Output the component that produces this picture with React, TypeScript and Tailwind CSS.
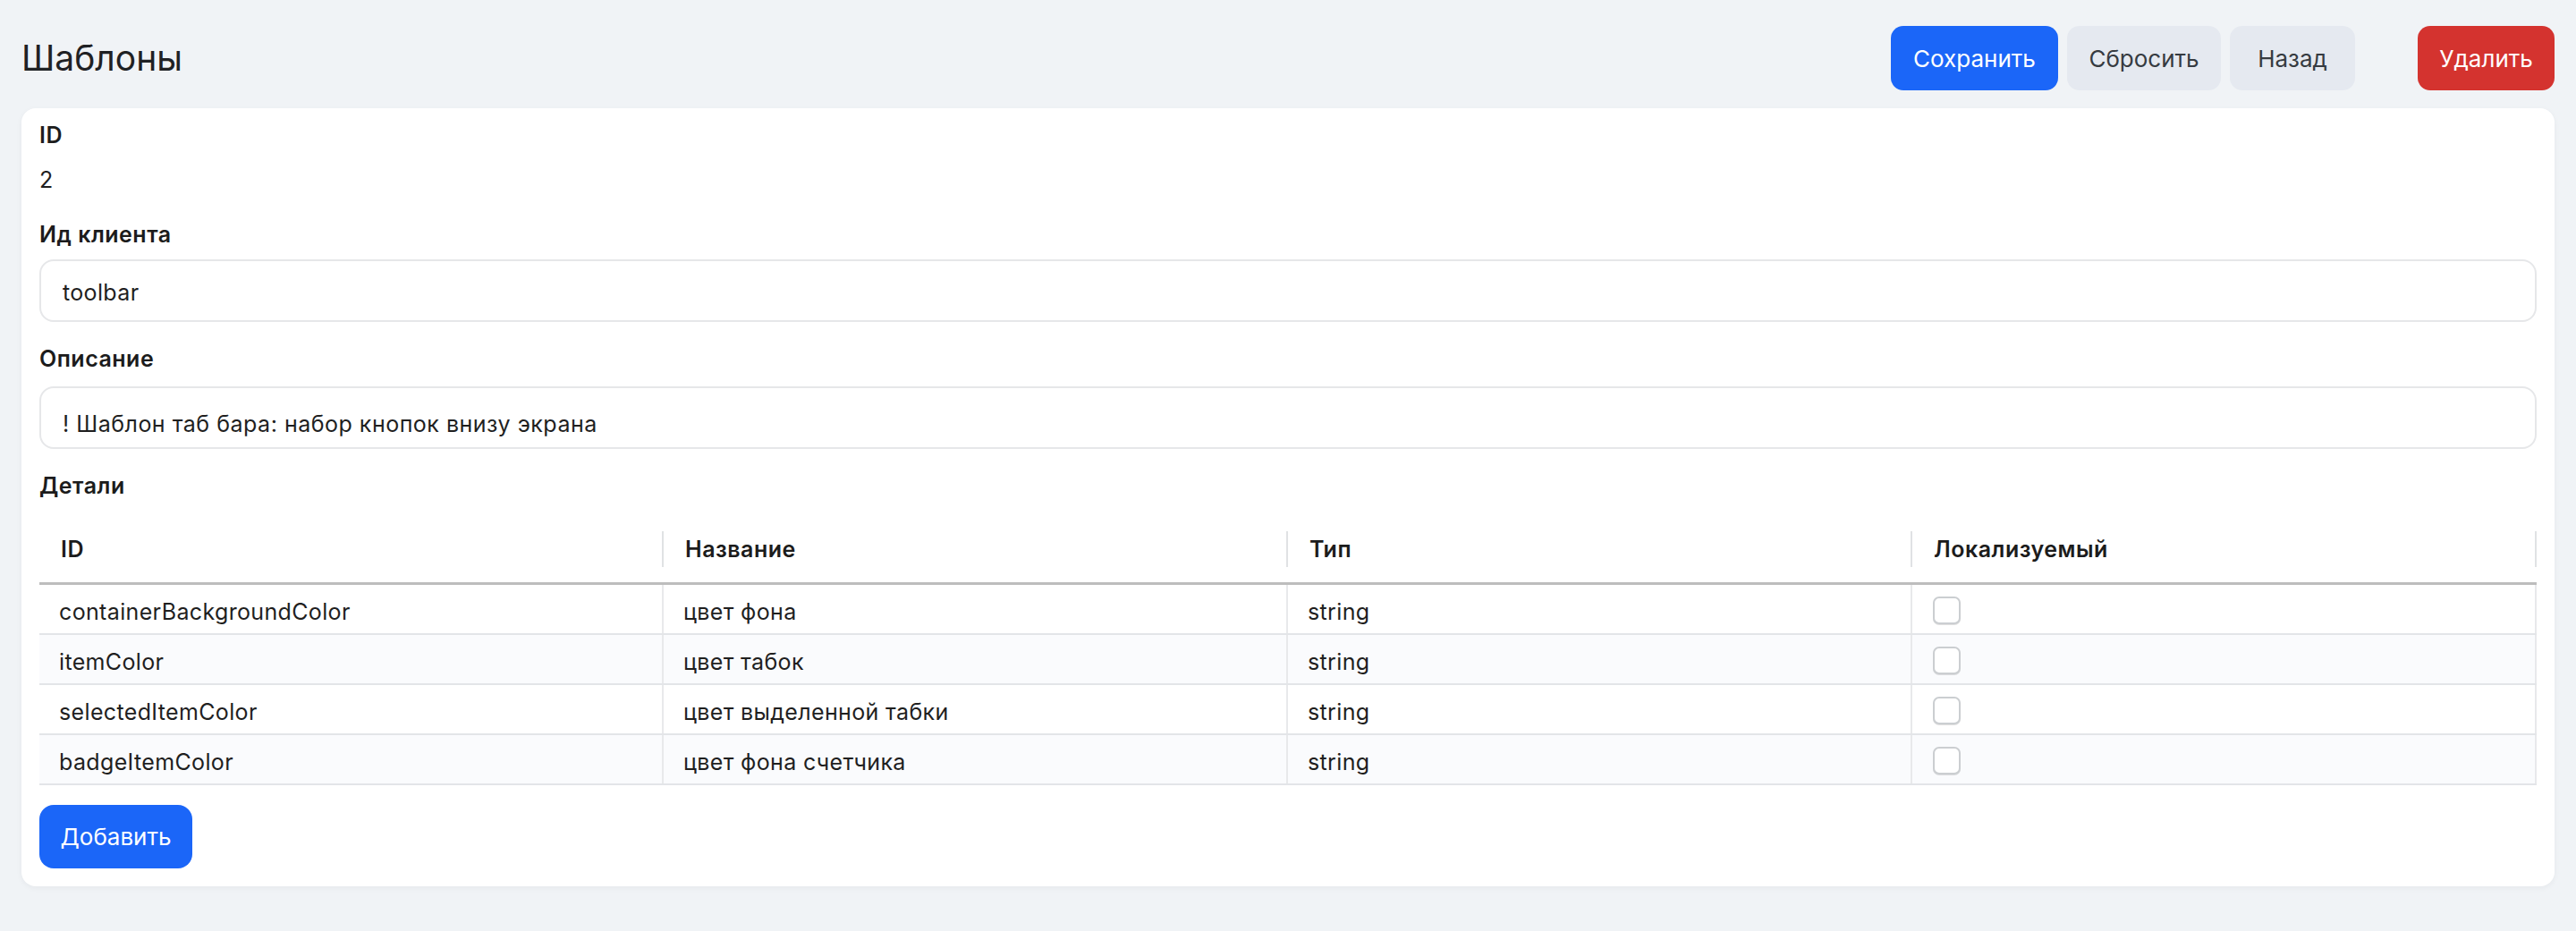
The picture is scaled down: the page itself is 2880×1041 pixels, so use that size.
import React from "react";

const rows = [
  { id: "containerBackgroundColor", name: "цвет фона", type: "string" },
  { id: "itemColor", name: "цвет табок", type: "string" },
  { id: "selectedItemColor", name: "цвет выделенной табки", type: "string" },
  { id: "badgeItemColor", name: "цвет фона счетчика", type: "string" },
];

function Checkbox() {
  return (
    <div className="w-[31px] h-[31px] rounded-[7px] border-2 border-[#cbced1] bg-white shadow-[0_1px_0_rgba(0,0,0,0.12)]" />
  );
}

export default function App() {
  return (
    <div
      className="min-h-screen w-full bg-[#f0f3f6] px-[24px] text-[#1f1f1f]"
      style={{ fontFamily: "Inter, 'Noto Sans', sans-serif" }}
    >
      <header className="flex items-center justify-between pt-[29px] pb-[20px]">
        <h1 className="text-[39px] leading-[48px] font-normal text-[#1f2124]">Шаблоны</h1>
        <div className="flex items-center">
          <button className="h-[72px] w-[187px] rounded-[14px] bg-[#1b66f8] text-[26px] text-white">
            Сохранить
          </button>
          <button className="ml-[10px] h-[72px] w-[172px] rounded-[14px] bg-[#e5e9f0] text-[26px] text-[#363b41]">
            Сбросить
          </button>
          <button className="ml-[10px] h-[72px] w-[140px] rounded-[14px] bg-[#e5e9f0] text-[26px] text-[#363b41]">
            Назад
          </button>
          <button className="ml-[70px] h-[72px] w-[153px] rounded-[14px] bg-[#d4332f] text-[26px] text-white">
            Удалить
          </button>
        </div>
      </header>

      <main className="rounded-[16px] bg-white px-[20px] pt-[16px] pb-[20px] shadow-[0_2px_6px_rgba(30,40,60,0.05)]">
        <div className="text-[25px] leading-[28px] tracking-[0.5px] font-semibold text-[#1c1c1c]">ID</div>
        <div className="mt-[22px] text-[25px] leading-[28px] tracking-[0.35px]">2</div>

        <div className="mt-[33px] text-[25px] leading-[28px] tracking-[0.5px] font-semibold text-[#1c1c1c]">Ид клиента</div>
        <div className="mt-[14px] h-[70px] rounded-[16px] border-2 border-[#e6e7e9] px-[24px] pt-[21px] text-[25px] leading-[28px] tracking-[0.35px]">
          toolbar
        </div>

        <div className="mt-[27px] text-[25px] leading-[28px] tracking-[0.5px] font-semibold text-[#1c1c1c]">Описание</div>
        <div className="mt-[17px] h-[70px] rounded-[16px] border-2 border-[#e6e7e9] px-[24px] pt-[26px] text-[25px] leading-[28px] tracking-[0.5px]">
          ! Шаблон таб бара: набор кнопок внизу экрана
        </div>

        <div className="mt-[27px] text-[25px] leading-[28px] tracking-[0.5px] font-semibold text-[#1c1c1c]">Детали</div>

        <div className="mt-[18px]">
          <div className="grid grid-cols-4 h-[79px] border-b-[3px] border-[#bdbdbd]">
            {["ID", "Название", "Тип", "Локализуемый"].map((h) => (
              <div key={h} className="flex items-center justify-between pl-[24px] pt-[2px]">
                <span className="text-[25px] leading-[28px] tracking-[0.5px] font-semibold text-[#1c1c1c]">{h}</span>
                <span className="h-[40px] w-[2px] bg-[#e0e2e4]" />
              </div>
            ))}
          </div>
          {rows.map((r, i) => (
            <div
              key={r.id}
              className={`grid grid-cols-4 h-[56px] border-b-2 border-[#e3e5e8] ${i % 2 === 1 ? "bg-[#fafbfd]" : "bg-white"}`}
            >
              <div className="flex items-center border-r-2 border-[#e8e9eb] pl-[22px] pt-[6px] text-[25px] leading-[28px] tracking-[0.35px]">{r.id}</div>
              <div className="flex items-center border-r-2 border-[#e8e9eb] pl-[22px] pt-[6px] text-[25px] leading-[28px] tracking-[0.35px]">{r.name}</div>
              <div className="flex items-center border-r-2 border-[#e8e9eb] pl-[22px] pt-[6px] text-[25px] leading-[28px] tracking-[0.35px]">{r.type}</div>
              <div className="flex items-center border-r-2 border-[#e8e9eb] pl-[23px] pt-[3px]">
                <Checkbox />
              </div>
            </div>
          ))}
        </div>

        <button className="mt-[22px] h-[71px] w-[171px] rounded-[16px] bg-[#1b66f8] text-[26px] text-white">
          Добавить
        </button>
      </main>
    </div>
  );
}
